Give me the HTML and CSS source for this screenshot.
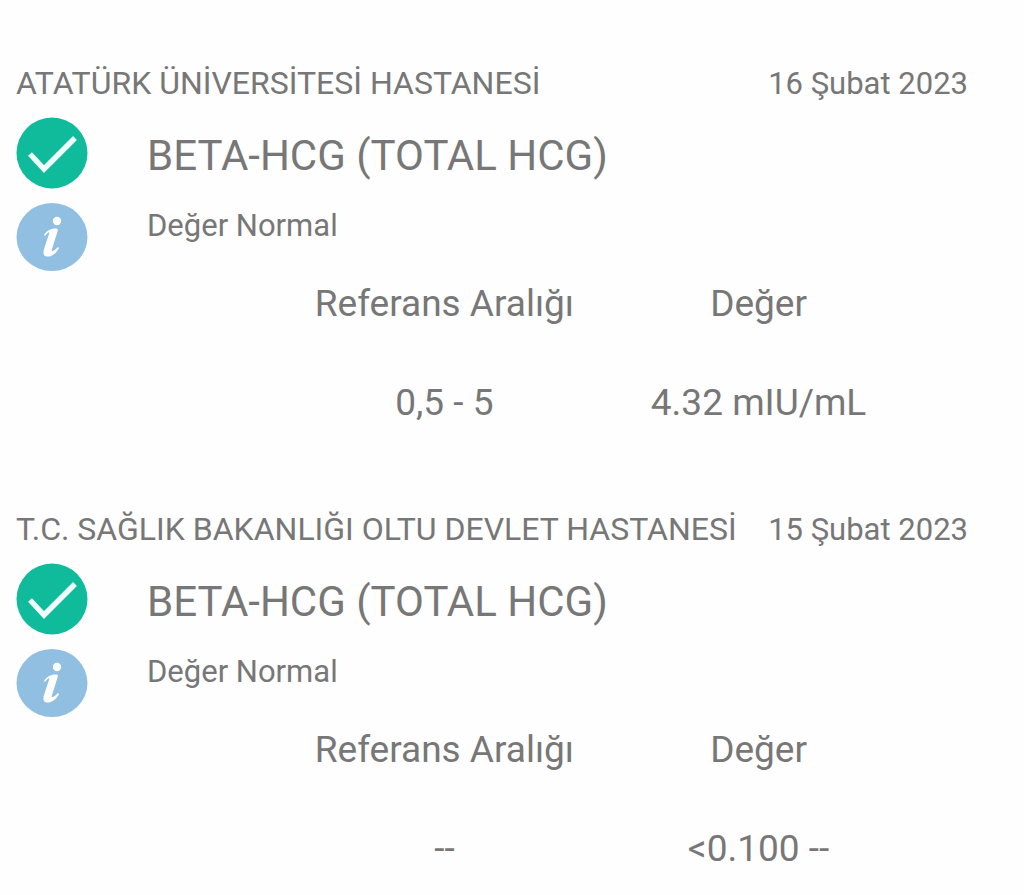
FILE: index.html
```html
<!DOCTYPE html>
<html lang="tr">
<head>
<meta charset="utf-8">
<meta name="viewport" content="width=device-width, initial-scale=1">
<title>Tahlil Sonuçları</title>
<link rel="stylesheet" href="styles.css">
</head>
<body>
<svg class="sprite" aria-hidden="true">
<symbol id="check" viewBox="0 0 72 72"><circle cx="36" cy="36" r="35.500" fill="#10bb9b"/><path d="M14 37L28 52L59 21" fill="none" stroke="#effffb" stroke-width="5.400"/></symbol>
<symbol id="info" viewBox="0 0 72 68"><ellipse cx="36" cy="34" rx="35.500" ry="34" fill="#90bfe2"/><circle cx="41" cy="18" r="4.200" fill="#fff"/><path d="M28 32C31 27 35 25.500 41 25.500L42 27L36 46C35 50 38 48 42 44L43 45C40 51 35 54 31 53.500C27 53 27 50 28 46L33 31C34 28 32 29 29 33Z" fill="#fff"/></symbol>
</svg>
<main class="results">
<article class="result">
<header class="heading"><span class="hospital">ATATÜRK ÜNİVERSİTESİ HASTANESİ</span><time datetime="2023-02-16">16 Şubat 2023</time></header>
<div class="body">
<div class="icons"><svg class="check" aria-hidden="true"><use href="#check"/></svg><svg class="info" aria-hidden="true"><use href="#info"/></svg></div>
<div class="detail"><h2 class="name">BETA-HCG (TOTAL HCG)</h2><p class="status">Değer Normal</p></div>
</div>
<table class="values"><thead><tr><th>Referans Aralığı</th><th>Değer</th></tr></thead><tbody><tr><td>0,5 - 5</td><td>4.32 mIU/mL</td></tr></tbody></table>
</article>
<article class="result">
<header class="heading"><span class="hospital">T.C. SAĞLIK BAKANLIĞI OLTU DEVLET HASTANESİ</span><time datetime="2023-02-15">15 Şubat 2023</time></header>
<div class="body">
<div class="icons"><svg class="check" aria-hidden="true"><use href="#check"/></svg><svg class="info" aria-hidden="true"><use href="#info"/></svg></div>
<div class="detail"><h2 class="name">BETA-HCG (TOTAL HCG)</h2><p class="status">Değer Normal</p></div>
</div>
<table class="values"><thead><tr><th>Referans Aralığı</th><th>Değer</th></tr></thead><tbody><tr><td>--</td><td>&lt;0.100 --</td></tr></tbody></table>
</article>
</main>
</body>
</html>
```
FILE: styles.css
```css
* { box-sizing: border-box; }
body { margin: 0; background: #fefefe; color: #777; font-family: Roboto, sans-serif; }
.sprite { position: absolute; width: 0; height: 0; }
.results { padding: 63px 56px 0 16px; }
.result { padding-bottom: 40px; }
.result:last-child { padding-bottom: 0; }
.heading { display: flex; align-items: baseline; justify-content: space-between; height: 40px; font-size: 31px; line-height: 40px; white-space: nowrap; }
.hospital { font-size: 32px; }
.body { display: flex; gap: 59px; padding-top: 14px; }
.icons { display: flex; flex-direction: column; gap: 14px; }
.check { display: block; width: 72px; height: 72px; }
.info { display: block; width: 72px; height: 68px; }
.name { margin: 0; padding-top: 13px; font-size: 42px; font-weight: 400; line-height: 52px; }
.status { margin: 0; padding-top: 24px; font-size: 31px; line-height: 40px; }
.values { width: 66%; margin-left: 28.5%; table-layout: fixed; border-collapse: collapse; font-size: 37px; }
.values th, .values td { padding: 0; text-align: center; font-weight: 400; white-space: nowrap; }
.values th { height: 64px; }
.values td { height: 134px; }
```
